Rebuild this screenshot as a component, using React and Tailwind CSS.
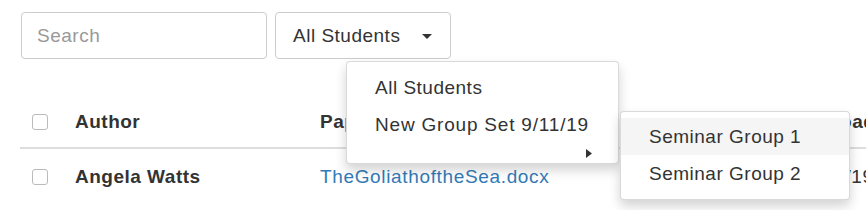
export default function App() {
  const font = { fontFamily: '"Liberation Sans", Arial, sans-serif' };
  return (
    <div className="relative w-[866px] h-[210px] overflow-hidden bg-white text-[19px] tracking-[0.5px] text-[#333] whitespace-nowrap" style={font}>
      <div className="flex gap-[8px] pl-[21px] pt-[12px]">
        <div className="w-[246px] h-[47px] border border-[#ccc] rounded-[4px] flex items-center pl-[15px] pt-[1px] text-[#999]">
          Search
        </div>
        <div className="w-[176px] h-[47px] border border-[#ccc] rounded-[4px] flex items-center pl-[17px] pt-[1px]">
          <span>All Students</span>
          <svg width="10" height="5" viewBox="0 0 10 5" className="ml-[22px]">
            <polygon points="0,0 10,0 5,5" fill="#333" />
          </svg>
        </div>
      </div>

      <div className="ml-[20px] mt-[35px] w-[900px]">
        <div className="flex items-center h-[55px] border-b-2 border-[#ddd] font-bold pt-[3px]">
          <div className="w-[55px] shrink-0 pl-[12px] flex items-center">
            <div className="w-[16px] h-[16px] border border-[#bbb] rounded-[3px] bg-white" />
          </div>
          <div className="w-[245px] shrink-0">Author</div>
          <div className="w-[488px] shrink-0">Paper</div>
          <div className="shrink-0">Upload Date</div>
        </div>
        <div className="flex items-center h-[54px] pt-[2px]">
          <div className="w-[55px] shrink-0 pl-[12px] flex items-center">
            <div className="w-[16px] h-[16px] border border-[#bbb] rounded-[3px] bg-white" />
          </div>
          <div className="w-[245px] shrink-0 font-bold">Angela Watts</div>
          <div className="w-[488px] shrink-0 text-[#337ab7] tracking-[0.65px]">TheGoliathoftheSea.docx</div>
          <div className="shrink-0">9/11/19</div>
        </div>
      </div>

      <div className="absolute left-[346px] top-[61px] w-[273px] h-[103px] bg-white border border-[rgba(0,0,0,0.15)] rounded-[4px] shadow-[0_6px_12px_rgba(0,0,0,0.175)] pt-[7px]">
        <div className="h-[37px] flex items-center pl-[28px] pt-[1px]">All Students</div>
        <div className="h-[37px] flex items-center pl-[28px] pt-[1px] tracking-[0.8px]">New Group Set 9/11/19</div>
        <div className="flex justify-end pr-[26px] pt-[6px]">
          <svg width="6" height="9" viewBox="0 0 6 9">
            <polygon points="0,0 6,4.5 0,9" fill="#333" />
          </svg>
        </div>
      </div>

      <div className="absolute left-[620px] top-[111px] w-[230px] h-[89px] bg-white border border-[rgba(0,0,0,0.15)] rounded-[4px] shadow-[0_6px_12px_rgba(0,0,0,0.175)] pt-[6px]">
        <div className="h-[37px] flex items-center pl-[28px] pt-[2px] bg-[#f5f5f5]">Seminar Group 1</div>
        <div className="h-[37px] flex items-center pl-[28px] pt-[2px]">Seminar Group 2</div>
      </div>
    </div>
  );
}
